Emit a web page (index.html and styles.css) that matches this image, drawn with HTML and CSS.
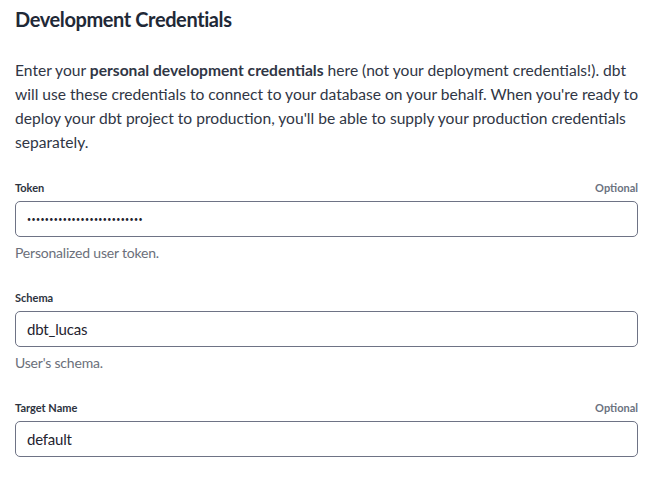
FILE: index.html
```html
<!DOCTYPE html>
<html>
<head>
<meta charset="utf-8">
<link rel="stylesheet" href="styles.css">
</head>
<body>
<div class="page">
  <h2 class="title">Development Credentials</h2>
  <p class="intro">Enter your <strong>personal development credentials</strong> here (not your deployment credentials!). dbt will use these credentials to connect to your database on your behalf. When you're ready to deploy your dbt project to production, you'll be able to supply your production credentials separately.</p>

  <div class="field">
    <div class="label-row"><span class="label">Token</span><span class="optional">Optional</span></div>
    <div class="input"><span class="dots">••••••••••••••••••••••••••</span></div>
    <div class="help">Personalized user token.</div>
  </div>

  <div class="field">
    <div class="label-row"><span class="label">Schema</span></div>
    <div class="input"><span class="value">dbt_lucas</span></div>
    <div class="help">User's schema.</div>
  </div>

  <div class="field">
    <div class="label-row"><span class="label">Target Name</span><span class="optional">Optional</span></div>
    <div class="input"><span class="value">default</span></div>
  </div>
</div>
</body>
</html>
```

FILE: styles.css
```css
html, body {
  margin: 0;
  padding: 0;
  background: #ffffff;
}
body {
  font-family: Lato, "Liberation Sans", sans-serif;
  color: #262a38;
}
.page {
  padding: 6px 16px 0 15px;
}
.title {
  margin: 0;
  font-size: 20px;
  font-weight: 700;
  line-height: 26px;
  letter-spacing: -0.4px;
  color: #1f2937;
}
.intro {
  margin: 26px 0 0 0;
  font-size: 15.6px;
  line-height: 24px;
  color: #303645;
}
.intro strong {
  font-weight: 700;
}
.field {
  margin-top: 27px;
}
.field + .field {
  margin-top: 30px;
}
.label-row {
  display: flex;
  justify-content: space-between;
  align-items: baseline;
  height: 14px;
  line-height: 14px;
  margin-bottom: 6px;
}
.label {
  font-size: 11px;
  font-weight: 700;
  color: #2d3340;
}
.optional {
  font-size: 11px;
  font-weight: 700;
  color: #6b7280;
}
.input {
  box-sizing: border-box;
  height: 36px;
  border: 1px solid #6e7385;
  border-radius: 5px;
  display: flex;
  align-items: center;
  padding: 0 11px;
}
.value {
  font-size: 15px;
  letter-spacing: -0.2px;
  color: #1f2430;
}
.dots {
  font-size: 7px;
  letter-spacing: 0.4px;
  color: #1f2430;
}
.help {
  margin-top: 7px;
  font-size: 14px;
  line-height: 17px;
  letter-spacing: -0.2px;
  color: #6b6f7a;
}
```
